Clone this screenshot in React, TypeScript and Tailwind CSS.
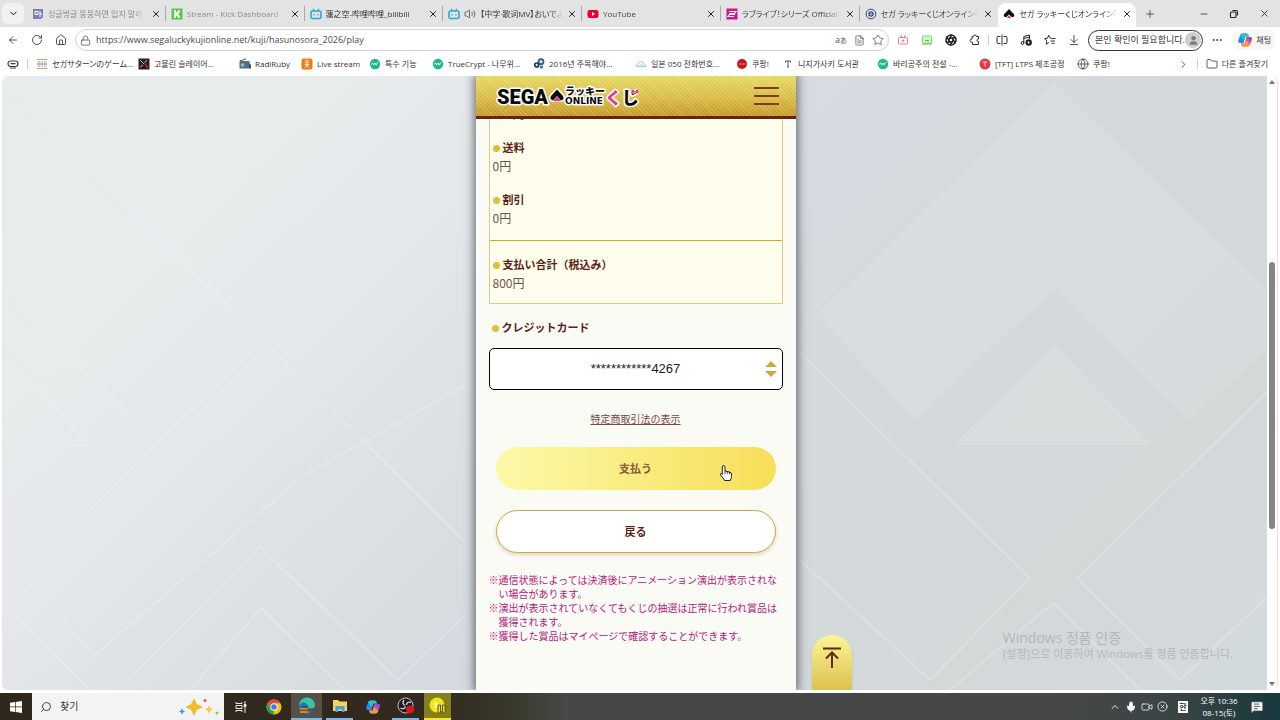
import React from 'react';
import {
  Aperture,
  ArrowDownToLine,
  ArrowLeft,
  ChevronDown,
  ChevronRight,
  ChevronUp,
  CircleX,
  Columns2,
  Ellipsis,
  FileText,
  Folder,
  Globe,
  House,
  Lock,
  MessageSquareText,
  Mic,
  Minus,
  Plus,
  RotateCw,
  Search,
  Star,
  Tv,
  User,
  Video,
  Volume2,
  X,
} from 'lucide-react';

const BiliIcon = () => (
  <svg viewBox="0 0 12 12" className="size-3 shrink-0" fill="none" stroke="#22aed1" strokeWidth="1.6">
    <rect x="1" y="3" width="10" height="7.5" rx="1.5" />
    <path d="M3 .8 4.6 3M9 .8 7.4 3M4 6v1.6M8 6v1.6" strokeWidth="1.2" />
  </svg>
);

const SpadeIcon = () => (
  <svg viewBox="0 0 12 12" className="size-3 shrink-0">
    <path d="M6 1 1 6.200q-.8 1.500.4 2.500 1.400.9 2.600-.2L6 6.500l2 2q1.200 1.100 2.600.2 1.200-1 .4-2.500z" fill="#111" />
    <path d="M6 7.600 3.800 10h4.400z" fill="#d8332f" />
  </svg>
);

const CopilotIcon = () => (
  <svg viewBox="0 0 16 16" className="size-4 shrink-0">
    <path d="M5.500 1.500h4q1.500 0 2 1.500l.5 1.500H8.500L6.500 11H3Q.6 11 1.300 8.500L3 3.500q.7-2 2.500-2z" fill="#1f8ee8" />
    <path d="M3 3.500q.7-2 2.500-2h4q1.500 0 2 1.500l.5 1.500H8.500L7 8z" fill="#31c4b5" />
    <path d="M10.500 14.500h-4q-1.500 0-2-1.500L4 11.500h3.500L9.500 5H13q2.400 0 1.700 2.500L13 12.500q-.7 2-2.500 2z" fill="#d94ba8" />
    <path d="M4 11.500h3.500L9 8l4.200 4q-.8 2.500-2.700 2.500h-4q-1.500 0-2-1.500z" fill="#f59a3c" />
    <path d="M9.500 5H13q2.400 0 1.700 2.500L14 9.500z" fill="#8b4be0" />
  </svg>
);

const WikiIcon = () => (
  <svg viewBox="0 0 12 12" className="size-3 shrink-0">
    <circle cx="6" cy="6" r="5.200" fill="#1fbb86" />
    <path d="M2.500 6.500q.8-2.500 1.500-1t.5 1.500q.8 0 1-2M6.500 5v1.500q.7 1 1.300 0V5.500l1.700-1.300" stroke="#fff" fill="none" strokeWidth=".9" />
  </svg>
);

interface TabItem {
  title: string;
  icon: React.ReactNode;
  tone: string;
  audio?: boolean;
}

const tabs: TabItem[] = [
  {
    title: '싱글벙글 뚱뚱하면 입지 말라',
    tone: 'text-[#8a8a8a]',
    icon: (
      <svg viewBox="0 0 12 12" className="size-3 shrink-0">
        <path d="M1 1h10v8l-2 2H1z" fill="#7b80b4" />
        <path d="M3 3.500h3v3H3zM8 3v6M8 6h2" stroke="#fff" fill="none" />
      </svg>
    ),
  },
  {
    title: 'Stream - Kick Dashboard',
    tone: 'text-[#8a8a8a]',
    icon: (
      <svg viewBox="0 0 12 12" className="size-3 shrink-0">
        <path d="M.5.5h11v11H.5z" fill="#57c94a" />
        <path d="M3 2h2v2h1V3h1V2h2v2.500H8v3h1V10H7V9H6V8H5v2H3z" fill="#eaffea" />
      </svg>
    ),
  },
  { title: '蓮之空-哔哩哔哩_bilibili', tone: 'text-[#333]', icon: <BiliIcon /> },
  { title: '【中字·歌词MV】おいでよ', tone: 'text-[#333]', icon: <BiliIcon />, audio: true },
  {
    title: 'YouTube',
    tone: 'text-[#444]',
    icon: (
      <svg viewBox="0 0 12 12" className="size-3 shrink-0">
        <rect x=".5" y="2" width="11" height="8" rx="2" fill="#e6002d" />
        <path d="m5 4 3 2-3 2z" fill="#fff" />
      </svg>
    ),
  },
  {
    title: 'ラブライブ！シリーズ Official We',
    tone: 'text-[#444]',
    icon: (
      <svg viewBox="0 0 12 12" className="size-3 shrink-0">
        <path d="M.5.5h11v11H.5z" fill="#d4128f" />
        <path d="M3 3.500h7L8.500 5.500H3M9 6.500H3.500L2 8.500h6" stroke="#fff" fill="none" strokeWidth="1.200" />
      </svg>
    ),
  },
  {
    title: 'セガ ラッキーくじオンライン「ラブ',
    tone: 'text-[#444]',
    icon: (
      <svg viewBox="0 0 12 12" className="size-3 shrink-0">
        <circle cx="6" cy="6" r="4.800" fill="#e8ecf6" stroke="#33426f" />
        <circle cx="6" cy="6" r="2.700" fill="#33426f" />
        <path d="M6 4v4M4.500 6h3" stroke="#e8ecf6" strokeWidth=".7" />
      </svg>
    ),
  },
  { title: 'セガ ラッキーくじオンライン「ラブ', tone: 'text-[#333]', icon: <SpadeIcon /> },
];

const bookmarks = [
  {
    label: 'セガサターンのゲーム…',
    width: 'w-[102px]',
    icon: (
      <svg viewBox="0 0 12 12" className="size-3 shrink-0">
        <path d="M1 1.500h10M1 10.500h10" stroke="#e0a25a" />
        <path d="M2 4h8M2 8h8" stroke="#9b8f8a" strokeDasharray="2 1" />
        <path d="M1 6h10" stroke="#444" strokeDasharray="1.500 .7" />
      </svg>
    ),
  },
  {
    label: '고블린 슬레이어…',
    width: 'w-[101px]',
    icon: (
      <svg viewBox="0 0 12 12" className="size-3 shrink-0">
        <path d="M.5.5h11v11H.5z" fill="#2c1d20" />
        <path d="m2 2 4 4M9 2 6.500 5M2 9l3-2" stroke="#b9a9a9" />
        <path d="M7 6l3 4" stroke="#c02638" strokeWidth="1.600" />
      </svg>
    ),
  },
  {
    label: 'RadiRuby',
    width: 'w-[62px]',
    icon: (
      <svg viewBox="0 0 12 12" className="size-3 shrink-0">
        <path d="M1 3 7 .8" stroke="#555" />
        <path d="M.5 3h10v7.500H.5z" fill="#55707c" />
        <circle cx="3.500" cy="7" r="1.800" fill="#9fb9c4" />
        <path d="M7 5h3v5.500h2V7L10 5" fill="#2c536b" />
      </svg>
    ),
  },
  {
    label: 'Live stream',
    width: 'w-[68px]',
    icon: (
      <svg viewBox="0 0 12 12" className="size-3 shrink-0">
        <rect x=".5" y=".5" width="11" height="11" rx="2" fill="#ee7b12" />
        <circle cx="6" cy="3.700" r="1.500" fill="none" stroke="#fff" />
        <path d="M3.700 6.300q2.300 1.500 4.600 0M6 7.200 4 9.700M6 7.200l2 2.500" stroke="#fff" fill="none" />
      </svg>
    ),
  },
  { label: '특수 기능', width: 'w-[63px]', icon: <WikiIcon /> },
  { label: 'TrueCrypt - 나무위…', width: 'w-[101px]', icon: <WikiIcon /> },
  {
    label: '2016년 주목해야…',
    width: 'w-[102px]',
    icon: (
      <svg viewBox="0 0 12 12" className="size-3 shrink-0">
        <circle cx="8" cy="3.700" r="2.500" fill="#cfe3ea" stroke="#2d5f86" strokeWidth="1.800" />
        <circle cx="3.700" cy="7" r="2" fill="#cfe3ea" stroke="#1d3a55" strokeWidth="1.700" />
        <circle cx="8.500" cy="9" r="1.800" fill="#3f88a8" />
      </svg>
    ),
  },
  {
    label: '일본 050 전화번호…',
    width: 'w-[101px]',
    icon: (
      <svg viewBox="0 0 12 12" className="size-3 shrink-0" fill="none" stroke="#9fd8c8">
        <path d="M1 8.500q0-2 2-2 .5-3 3-3t3 3q2 0 2 2zM4 8q2-3 4 0" />
      </svg>
    ),
  },
  {
    label: '쿠팡!',
    width: 'w-[46px]',
    icon: (
      <svg viewBox="0 0 12 12" className="size-3 shrink-0">
        <circle cx="6" cy="6" r="5" fill="#c8141c" />
        <path d="M2.500 6h7" stroke="#f3b5b0" strokeDasharray="1 .5" />
      </svg>
    ),
  },
  {
    label: '니지가사키 도서관',
    width: 'w-[95px]',
    icon: (
      <svg viewBox="0 0 12 12" className="size-3 shrink-0">
        <path d="M3.500 4.500V3h5v1.500M6 3v6M5 9h2" stroke="#444" fill="none" strokeWidth=".9" />
      </svg>
    ),
  },
  { label: '바리공주의 전설 -…', width: 'w-[102px]', icon: <WikiIcon /> },
  {
    label: '[TFT] LTPS 제조공정',
    width: 'w-[98px]',
    icon: (
      <svg viewBox="0 0 12 12" className="size-3 shrink-0">
        <circle cx="6" cy="6" r="5.500" fill="#df3b44" />
        <path d="M3.500 4h5M6 4v4.500" stroke="#f8c6c4" fill="none" strokeWidth="1.200" />
      </svg>
    ),
  },
  { label: '쿠팡!', width: 'w-[46px]', icon: <Globe size={12} strokeWidth={1.5} className="shrink-0" /> },
];

const TabStrip = () => (
  <div className="flex h-[27px] items-stretch bg-[#e3e3e3]">
    <div className="flex w-[27px] shrink-0 items-center justify-start pl-0.5">
      <button className="grid h-[21px] w-[22px] place-items-center rounded-md bg-[#f1f1f1]" aria-label="탭 검색">
        <ChevronDown size={11} strokeWidth={2} />
      </button>
    </div>
    <div className="flex min-w-0 flex-1">
      {tabs.map((tab, i) => {
        const active = i === tabs.length - 1;
        return (
          <div
            key={i}
            className={
              active
                ? 'mt-[3px] flex min-w-0 flex-1 items-center gap-1 rounded-t-lg bg-white pb-[3px] pl-[5px] pr-1'
                : 'my-1.5 flex min-w-0 flex-1 items-center gap-1 border-r border-[#aaa] pl-[5px] pr-1 nth-7:border-transparent'
            }
          >
            {tab.icon}
            {tab.audio && <Volume2 size={12} strokeWidth={1.5} className="shrink-0 text-[#444]" />}
            <span
              className={`min-w-0 flex-1 overflow-hidden whitespace-nowrap mask-r-from-85% text-[8px] leading-[14px] [font-feature-settings:'palt'] ${tab.tone}`}
            >
              {tab.title}
            </span>
            <button className="shrink-0" aria-label="탭 닫기">
              <X size={10} strokeWidth={2} />
            </button>
          </div>
        );
      })}
    </div>
    <div className="flex w-[144px] shrink-0 items-center pl-2 text-[#333]">
      <button aria-label="새 탭">
        <Plus size={12} strokeWidth={1.5} />
      </button>
      <div className="ml-auto flex items-center gap-5 pr-2.5">
        <button aria-label="최소화">
          <Minus size={10} strokeWidth={2} />
        </button>
        <button aria-label="이전 크기로 복원">
          <svg viewBox="0 0 10 10" className="size-2.5" fill="none" stroke="#222" strokeWidth="1.100">
            <rect x="1.500" y="3" width="5.500" height="5.500" rx="1" />
            <path d="M3.500 1.500h3.500q1.500 0 1.500 1.500v3.500" />
          </svg>
        </button>
        <button aria-label="닫기">
          <X size={11} strokeWidth={2} />
        </button>
      </div>
    </div>
  </div>
);

const Toolbar = () => (
  <div className="flex h-[26px] items-center bg-white pl-[7px] pr-[5px] text-[#333]">
    <div className="flex shrink-0 items-center gap-3 pr-2">
      <button aria-label="뒤로">
        <ArrowLeft size={12} strokeWidth={1.7} />
      </button>
      <button aria-label="새로 고침">
        <RotateCw size={12} strokeWidth={1.7} />
      </button>
      <button aria-label="홈">
        <House size={12} strokeWidth={1.7} />
      </button>
    </div>
    <div className="flex h-[22px] min-w-0 flex-1 items-center gap-[5px] rounded-full border border-[#d2d2d2] px-1">
      <Lock size={11} strokeWidth={1.7} className="shrink-0 text-[#555]" />
      <input
        aria-label="주소 표시줄"
        className="min-w-0 flex-1 bg-transparent text-[9px] text-[#4a4a4a] outline-none"
        defaultValue="https://www.segaluckykujionline.net/kuji/hasunosora_2026/play"
      />
      <button className="text-[9px] leading-3 text-[#555]" aria-label="번역">
        a<span className="text-[7px]">あ</span>
      </button>
      <button className="ml-0.5" aria-label="몰입형 리더">
        <FileText size={11} strokeWidth={1.6} className="text-[#555]" />
      </button>
      <button className="ml-0.5" aria-label="즐겨찾기 추가">
        <Star size={12} strokeWidth={1.6} className="text-[#555]" />
      </button>
    </div>
    <div className="flex shrink-0 items-center gap-3 pl-2">
      <button aria-label="TV">
        <svg viewBox="0 0 12 12" className="size-3" fill="none" stroke="#ea7d93">
          <rect x="1.500" y="3.500" width="9" height="6.500" rx="1" />
          <path d="M3.500 1 5 3.500M8.500 1 7 3.500M4.500 6.700h3M6 5.200v3" />
        </svg>
      </button>
      <button aria-label="캡처">
        <svg viewBox="0 0 12 12" className="size-3">
          <rect x="1.500" y="2" width="9" height="7" rx="1" fill="#d8ffd0" stroke="#6fe066" />
          <path d="M4 6.500h4M1 10h10" stroke="#3fc938" />
        </svg>
      </button>
      <button aria-label="조리개">
        <Aperture size={12} strokeWidth={3} className="text-[#222]" />
      </button>
      <button aria-label="확장">
        <svg viewBox="0 0 12 12" className="size-3" fill="none" stroke="#333">
          <path d="M3 2.500h1.500q0-1.500 1.500-1.500t1.500 1.500H9.500v2.500q-1.500 0-1.500 1.300t1.500 1.300V10.500H3.500V8.200Q1 8.300 1 6.500T3 5z" />
        </svg>
      </button>
    </div>
    <div className="mx-[7px] h-2.5 w-px shrink-0 bg-[#ccc]" />
    <div className="flex shrink-0 items-center gap-3">
      <button aria-label="화면 분할">
        <svg viewBox="0 0 12 12" className="size-3" fill="none" stroke="#333">
          <path d="M4.500 2.500H2q-1 0-1 1v5q0 1 1 1h2.500M7.500 2.500H10q1 0 1 1v5q0 1-1 1H7.500M6 .5v11" />
        </svg>
      </button>
      <button aria-label="음악">
        <svg viewBox="0 0 12 12" className="size-3" fill="none" stroke="#222">
          <path d="M3.800 9V2.500L9.500 1v4M3.800 4.500l5.700-1.500" />
          <circle cx="2.500" cy="9" r="1.400" />
          <circle cx="8.700" cy="8.500" r="3.200" fill="#222" stroke="none" />
          <path d="m7.800 7 2.200 1.500L7.800 10z" fill="#fff" stroke="none" />
        </svg>
      </button>
      <button aria-label="즐겨찾기">
        <svg viewBox="0 0 12 12" className="size-3" fill="none" stroke="#333" strokeLinejoin="round">
          <path d="M7.500 4.500 6.300 4.300 4.800 1.200 3.300 4.300.6 4.700l2.200 2.200-.6 3.300 2.600-1.500M7.500 4.500h4M6.500 7h4.500M7.500 9.300h3" />
        </svg>
      </button>
      <button aria-label="다운로드">
        <ArrowDownToLine size={12} strokeWidth={1.7} />
      </button>
    </div>
    <button className="ml-2 flex h-[21px] w-[115px] shrink-0 items-center justify-between rounded-full border border-[#333] pl-1.5 pr-px text-[9px] leading-3 whitespace-nowrap">
      본인 확인이 필요합니다.
      <span className="grid size-4 place-items-center rounded-full bg-[#cfcfcf]">
        <User size={11} fill="#777" className="text-[#777]" />
      </span>
    </button>
    <button className="ml-2 shrink-0" aria-label="더 보기">
      <Ellipsis size={12} />
    </button>
    <button className="ml-2.5 flex h-5 w-[42px] shrink-0 items-center justify-between rounded-md bg-[#f7f7f7] px-1 text-[8px] whitespace-nowrap">
      <CopilotIcon />
      채팅
    </button>
  </div>
);

const BookmarkBar = () => (
  <nav className="flex h-[22px] items-center bg-white pl-[7px] pr-3 text-[8px] leading-3 text-[#333] [font-feature-settings:'palt']">
    <svg viewBox="0 0 12 12" className="size-3 shrink-0" fill="none" stroke="#444" strokeWidth="1.200">
      <rect x="1" y="3" width="10" height="5.500" rx="2.700" />
      <path d="M3.500 5.700h5M3 10h6" />
    </svg>
    <div className="mx-2 h-2.5 w-px shrink-0 bg-[#ccc]" />
    {bookmarks.map((item, i) => (
      <a key={i} href="#" className={`flex shrink-0 items-center gap-1 whitespace-nowrap ${item.width}`}>
        {item.icon}
        {item.label}
      </a>
    ))}
    <div className="ml-auto flex shrink-0 items-center gap-2">
      <ChevronRight size={11} strokeWidth={1.8} />
      <div className="h-2.5 w-px bg-[#ccc]" />
      <a href="#" className="flex items-center gap-1 whitespace-nowrap">
        <Folder size={12} strokeWidth={1.6} />
        다른 즐겨찾기
      </a>
    </div>
  </nav>
);

// Spade outlines behind the page column
const Backdrop = () => (
  <svg
    viewBox="2 76 1265 614"
    preserveAspectRatio="none"
    className="absolute inset-0 size-full"
    fill="none"
    aria-hidden="true"
  >
    <defs>
      <linearGradient id="left" x1="0" y1="0" x2="1" y2="1">
        <stop offset="0" stopColor="#e7ecec" />
        <stop offset=".3" stopColor="#e6ebec" />
        <stop offset=".45" stopColor="#e4e7eb" />
        <stop offset=".65" stopColor="#dbe0e3" />
        <stop offset=".88" stopColor="#d4d9e0" />
        <stop offset="1" stopColor="#d1d6da" />
      </linearGradient>
      <linearGradient id="right" x1="0" y1="0" x2="1" y2="1">
        <stop offset="0" stopColor="#d8dfe2" />
        <stop offset=".2" stopColor="#d5dbe1" />
        <stop offset=".35" stopColor="#d4d9dd" />
        <stop offset=".75" stopColor="#d3d8d9" />
        <stop offset="1" stopColor="#d3dade" />
      </linearGradient>
    </defs>
    <path d="M2 76h634v614H2z" fill="url(#left)" />
    <path d="M636 76h631v614H636z" fill="url(#right)" />
    <path d="M1055 82 815 315l101 105 139-130 135 132 77-72v-60z" fill="#fafffb" opacity=".1" />
    <path d="m1055 345-102 100h199z" fill="#fafffb" opacity=".13" />
    <g stroke="#f4f9fa" strokeWidth="2" opacity=".25">
      <path d="m12 97 225 218M12 302l128 123M2 350l88 95H12" />
      <path d="m55 545 207-205 203 202M130 678l130-131 138 133 67-65M190 690l71-82 84 82M2 602l88 88" />
      <path d="m25 580 70 75 205-177 165-93" />
      <path d="m800 353 230 225-100 102-130-120M1267 392 1077 578l103 102 87-83M950 690l103-87 87 87" />
    </g>
  </svg>
);

const Logo = () => (
  <svg viewBox="0 0 144 24" className="h-6 w-36" role="img" aria-label="SEGA ラッキーくじ ONLINE">
    <g stroke="#fff" strokeWidth="3" strokeLinejoin="round" paintOrder="stroke" fill="#0c0c0c">
      <text x="1" y="20" fontFamily="Roboto" fontWeight="900" fontSize="20">
        SEGA
      </text>
      <path d="M61 5.500 55 12q-1.500 2 .3 3.700 1.700 1.200 3.400 0L61 14l2.300 1.700q1.700 1.200 3.400 0 1.800-1.700.3-3.700z" />
      <path d="m61 12.500-4 4.500h8z" fill="#e0399a" strokeWidth="1" />
      <text x="69" y="11" fontFamily="Noto Sans CJK JP" fontWeight="900" fontSize="10">
        ラッキー
      </text>
      <text x="69" y="20" fontFamily="DejaVu Sans" fontWeight="700" fontSize="9">
        ONLINE
      </text>
      <text x="109" y="20" fontFamily="Noto Sans CJK JP" fontWeight="900" fontSize="17">
        <tspan fill="#e0399a">く</tspan>じ
      </text>
    </g>
    <g fill="#e0399a" stroke="#fff" strokeWidth=".5">
      <circle cx="137" cy="7.500" r="2" />
      <circle cx="141" cy="7.500" r="2" />
    </g>
  </svg>
);

const Heading = ({ children }: { children: React.ReactNode }) => (
  <span className="flex items-center gap-[3px] text-[11px] leading-[18px] font-bold text-[#5a1f16]">
    <span className="mt-0.5 size-[7px] rounded-full bg-[#e2bd3c]" />
    {children}
  </span>
);

const PriceRow = ({ label, value }: { label: string; value: string }) => (
  <div className="px-[3px]">
    <dt>
      <Heading>{label}</Heading>
    </dt>
    <dd className="text-xs leading-5 text-[#6b564f]">{value}</dd>
  </div>
);

const notes = [
  '※通信状態によっては決済後にアニメーション演出が表示されない場合があります。',
  '※演出が表示されていなくてもくじの抽選は正常に行われ賞品は獲得されます。',
  '※獲得した賞品はマイページで確認することができます。',
];

const KujiPage = () => (
  <div className="relative z-0 ml-0.5 w-80 bg-[#fbfbf6] font-['Noto_Sans_CJK_JP',sans-serif] shadow-[0_0_9px_2px_rgba(70,70,75,0.75)]">
    <header className="relative z-10 flex h-[43px] items-center justify-between border-b-3 border-[#6a2311] bg-[repeating-linear-gradient(45deg,rgba(255,250,190,0.2)_0px_1px,transparent_1px_3px),linear-gradient(to_bottom,#e6d964,#d7bb48_55%,#c59a2b)] pl-5 pr-[17px]">
      <a href="#">
        <Logo />
      </a>
      <button className="flex w-[25px] flex-col gap-1.5" aria-label="メニュー">
        <span className="h-0.5 bg-[#84391a]" />
        <span className="h-0.5 bg-[#84391a]" />
        <span className="h-0.5 bg-[#84391a]" />
      </button>
    </header>

    <main className="px-[13px]">
      <dl className="-mt-4 border border-[#d9cd86] bg-[#fffdeb]">
        <div className="flex flex-col gap-3.5 pb-3">
          <dd className="px-[3px] text-xs leading-5 text-[#6b564f]">800円</dd>
          <PriceRow label="送料" value="0円" />
          <PriceRow label="割引" value="0円" />
        </div>
        <div className="border-t border-[#cfa93a] pt-3.5 pb-2.5">
          <PriceRow label="支払い合計（税込み）" value="800円" />
        </div>
      </dl>

      <label htmlFor="card" className="mt-3.5 block px-[3px]">
        <Heading>クレジットカード</Heading>
      </label>
      <div className="relative mt-3">
        <select
          id="card"
          className="h-[42px] w-full appearance-none rounded-[5px] border border-black bg-white text-center [text-align-last:center] font-['Liberation_Sans',sans-serif] text-[13px] text-[#222] outline-none"
        >
          <option>************4267</option>
        </select>
        <svg
          viewBox="0 0 12 16"
          className="pointer-events-none absolute top-[13px] right-1.5 h-4 w-3"
          fill="#cfa93a"
          aria-hidden="true"
        >
          <path d="m6 0 6 6H0zM0 10h12l-6 6z" />
        </svg>
      </div>

      <p className="mt-[22px] text-center text-[10px] leading-3.5">
        <a href="#" className="text-[#7a463e] underline">
          特定商取引法の表示
        </a>
      </p>

      <div className="mt-[21px] flex flex-col gap-5 px-[7px]">
        <button className="relative h-[43px] rounded-full bg-linear-to-r from-[#fcf9a9] via-[#f9ec80] to-[#f8dd58] text-[11px] font-bold text-[#8a5a35]">
          支払う
          <svg viewBox="0 0 14 18" className="absolute top-[17px] right-[43px] h-[18px] w-3.5" aria-hidden="true">
            <path
              d="M4.500 1.500q1.500 0 1.500 1.500v4l5 1.200q1.500.5 1.500 2v2.500q0 1.200-.7 2.300l-.5 1.500H5.500L4.700 15 1.500 10.800q-.7-1.500 1-1.300L3.300 10.500V3q0-1.500 1.200-1.500z"
              fill="#fff"
              stroke="#222"
              strokeWidth="1"
            />
            <path d="M6 7v3M8.300 7.500V10M10.500 8v2.200" stroke="#222" strokeWidth=".8" />
          </svg>
        </button>
        <button className="h-[43px] rounded-full border border-[#cfa93a] bg-white text-[11px] font-bold text-[#5a1f16] shadow-[0_2px_4px_rgba(120,60,20,0.2)]">
          戻る
        </button>
      </div>

      <ul className="mt-5 text-[10px] leading-3.5 text-[#b3197c]">
        {notes.map((note) => (
          <li key={note} className="-mr-1 pl-2.5 -indent-2.5">
            {note}
          </li>
        ))}
      </ul>
    </main>

    <a
      href="#"
      aria-label="ページの先頭へ"
      className="absolute bottom-0 left-full ml-4 flex h-[55px] w-10 justify-center rounded-t-full bg-linear-to-b from-[#fbf694] to-[#dcc14f] pt-3 shadow-sm"
    >
      <svg viewBox="0 0 20 22" className="h-[22px] w-5" fill="none" stroke="#6a2311" strokeWidth="2">
        <path d="M1 1.500h18M10 6v15M4 11.500l6-6 6 6" />
      </svg>
    </a>
  </div>
);

const Taskbar = () => (
  <footer className="flex h-[27px] shrink-0 items-stretch bg-[linear-gradient(to_right,#30271c_0%,#332a1f_34%,#38392a_40%,#474747_44%,#474747_82%,#3a4445_92%,#17383c_100%)] text-white">
    <button className="grid w-8 place-items-center" aria-label="시작">
      <svg viewBox="0 0 12 12" className="size-3" fill="#fff">
        <path d="M0 1.700 5 1v4.600H0zM5.700.9 12 0v5.600H5.700zM0 6.300h5V11l-5-.7zM5.700 6.300H12V12l-6.300-.9z" />
      </svg>
    </button>
    <label className="flex w-48 items-center gap-2 bg-[#f3f3f3] pl-2 pr-1 text-[#333]">
      <Search size={12} strokeWidth={1.8} className="shrink-0 -scale-x-100" />
      <input
        aria-label="찾기"
        defaultValue="찾기"
        className="min-w-0 flex-1 bg-transparent text-[10px] text-[#333] outline-none"
      />
      <svg viewBox="0 0 42 20" className="h-5 w-[42px] shrink-0">
        <path d="m16 2 2.500 5.500L24 10l-5.500 2.500L16 18l-2.500-5.500L8 10l5.500-2.500z" fill="#f2bd2c" stroke="#f2bd2c" strokeLinejoin="round" />
        <path d="m31 8 1.200 3L35 12.500 32.200 14 31 17l-1.200-3-2.800-1.500 2.800-1.500z" fill="#f2cf4a" />
        <path d="m4 11 1 2.500 2 1-2 1L4 18l-1-2.500-2-1 2-1z" fill="#2ea3dd" />
        <circle cx="27" cy="3.500" r="1.500" fill="#e2573b" />
        <circle cx="39" cy="16" r="1.500" fill="#a5c63b" />
      </svg>
    </label>
    <button className="grid w-[33px] place-items-center" aria-label="작업 보기">
      <svg viewBox="0 0 12 12" className="size-3" fill="none" stroke="#e8e8e8">
        <path d="M1 1v1.500h6V1M1 11V9.500h6V11M1 4.500h6v3H1zM10 0v12" />
        <path d="M9 3.500h2v2H9z" fill="#e8e8e8" />
      </svg>
    </button>
    <button className="grid w-[34px] place-items-center" aria-label="Chrome">
      <svg viewBox="0 0 16 16" className="size-4">
        <circle cx="8" cy="8" r="7.500" fill="#f4c20d" />
        <path d="M1.500 4.200A7.500 7.500 0 0 1 14.500 4.300H8L4.800 9.900z" fill="#de4a3b" />
        <path d="M1.500 4.200 4.800 9.900 8 11.700l-.6 3.800A7.500 7.500 0 0 1 1.500 4.200z" fill="#2a9d52" />
        <circle cx="8" cy="8" r="3.700" fill="#fff" />
        <circle cx="8" cy="8" r="2.800" fill="#3b7de0" />
      </svg>
    </button>
    <button className="grid w-[31px] place-items-center border-b-2 border-[#7ab8ea] bg-[#565049]" aria-label="Edge">
      <svg viewBox="0 0 18 18" className="size-[18px]">
        <path d="M1 9a8 8 0 0 1 16-1q0 3.500-4 3.500-3 0-3-2Q9 6 5.500 6 2 6.500 1 9z" fill="#37c6a4" />
        <path d="M1 9q1-3.500 4.500-3.500Q9 6 9 8q-2 2 0 4.500t6 1.500A8 8 0 0 1 1 9z" fill="#1978d0" />
        <path d="M2 11h8v5H2z" fill="#c98b2f" />
        <path d="M4.500 11V9.500h3V11M2 13.300h8" stroke="#5a3a12" fill="none" />
      </svg>
    </button>
    <button className="mx-1 grid w-[27px] place-items-center border-b-2 border-[#7ab8ea]" aria-label="파일 탐색기">
      <svg viewBox="0 0 16 14" className="h-3.5 w-4">
        <path d="M1 1h5l1.500 1.500H15V12H1z" fill="#f6d164" />
        <path d="M3.500 7h9v6h-2.500v-2.500H6V13H3.500z" fill="#4a9fe0" />
      </svg>
    </button>
    <button className="grid w-[31px] place-items-center" aria-label="Copilot">
      <CopilotIcon />
    </button>
    <button className="ml-1 grid w-[27px] place-items-center border-b-2 border-[#7ab8ea]" aria-label="OBS">
      <svg viewBox="0 0 18 18" className="size-[18px]">
        <circle cx="8.500" cy="8.500" r="7.500" fill="#1c1a1d" stroke="#c9c9c9" />
        <path d="M8 8.500Q4.500 6.500 7 3M9.500 8q.5-4 4.500-2.500M8.500 9.500Q7 13 3.500 11" stroke="#d0d0d0" fill="none" strokeWidth="1.400" />
        <circle cx="13" cy="12.500" r="4" fill="#e3131b" />
      </svg>
    </button>
    <button className="ml-[5px] grid w-[27px] place-items-center border-b-2 border-[#f4ea1e] bg-[#85801d]" aria-label="녹화">
      <svg viewBox="0 0 18 18" className="size-[18px]">
        <circle cx="8" cy="8" r="7.500" fill="#f0e51c" />
        <path d="m5.500 4.500 6 3.500-6 3.500z" fill="#fff9b0" />
        <path d="M9 8h2.500v8H9zM13.500 8H16v8h-2.500z" fill="#f0e51c" stroke="#5d5912" />
      </svg>
    </button>
    <div className="ml-auto flex items-center pr-4">
      <div className="flex items-center gap-1 text-[#e8e8e8]">
        <ChevronUp size={12} strokeWidth={2} />
        <Mic size={12} fill="#fff" />
        <Video size={12} strokeWidth={1.7} />
        <CircleX size={11} strokeWidth={2} />
      </div>
      <span className="ml-2.5 grid h-3 w-2.5 place-items-center bg-white text-[8px] leading-3 font-bold text-[#333]">한</span>
      <div className="flex w-[62px] flex-col text-center text-[8px] leading-3">
        <span>오후 10:36</span>
        <span>08-15(토)</span>
      </div>
      <MessageSquareText size={14} fill="#fff" stroke="#32464a" strokeWidth={1.5} />
    </div>
  </footer>
);

export default function App() {
  return (
    <div className="flex h-screen flex-col overflow-hidden bg-white font-['Open_Sans','Noto_Sans_CJK_KR',sans-serif]">
      <TabStrip />
      <Toolbar />
      <BookmarkBar />
      <div className="flex min-h-0 flex-1 pt-px pr-0.5 pb-[3px] pl-0.5">
        <div className="relative flex min-w-0 flex-1 justify-center overflow-hidden rounded-l-md">
          <Backdrop />
          <KujiPage />
          <div className="pointer-events-none absolute right-[34px] bottom-[29px] text-[#b2b7bb]">
            <p className="text-sm leading-[18px]">Windows 정품 인증</p>
            <p className="text-[11px] leading-3.5">[설정]으로 이동하여 Windows를 정품 인증합니다.</p>
          </div>
        </div>
        <div className="flex w-[11px] shrink-0 flex-col items-center justify-between rounded-r-md border-r border-[#e3e3e3] py-1">
          <svg viewBox="0 0 6 4" className="h-1 w-1.5" fill="#777">
            <path d="m3 0 3 4H0z" />
          </svg>
          <div className="flex min-h-0 w-1.5 flex-1 flex-col">
            <div className="flex-[178]" />
            <div className="flex-[267] rounded-full bg-[#858585]" />
            <div className="flex-[153]" />
          </div>
          <svg viewBox="0 0 6 4" className="h-1 w-1.5" fill="#777">
            <path d="M0 0h6L3 4z" />
          </svg>
        </div>
      </div>
      <Taskbar />
    </div>
  );
}
